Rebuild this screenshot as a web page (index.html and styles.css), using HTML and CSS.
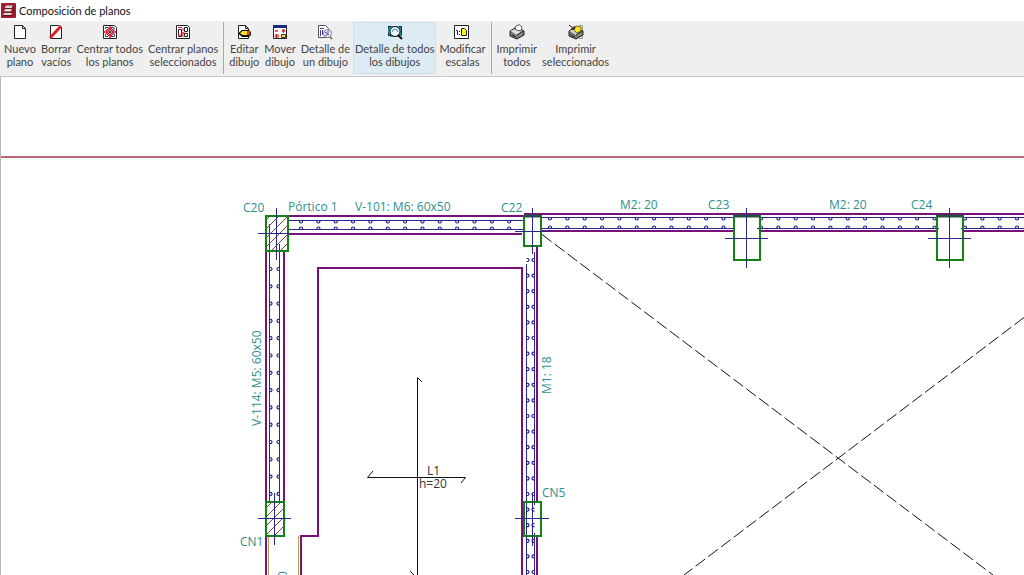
FILE: index.html
```html
<!DOCTYPE html>
<html lang="es">

<head>
    <meta charset="UTF-8">
    <title>Composición de planos</title>
    <link rel="stylesheet" href="styles.css">
</head>

<body>
    <header class="titlebar">
        <svg class="logo" viewBox="0 0 15 15" aria-hidden="true">
            <rect width="15" height="15" rx="1" fill="#a01c30" />
            <path d="M5 2.500h7l-1.500 3H3.500zM4 6h7l-1.500 3H3zM3 10h8l-1 2.500H2z" fill="#e9d5d5" />
            <path d="M3 5.500h8M3 9h8M2 12.500h9M12 3v7" stroke="#4d1820" fill="none" />
        </svg>
        <h1>Composición de planos</h1>
    </header>

    <nav class="toolbar">
        <button>
            <svg class="icon" viewBox="0 0 16 16"><path d="M2.500 1.500h8l3 3v10h-11z" fill="#fff" stroke="#222" /><path d="M10.500 1.500v3h3" fill="none" stroke="#222" /></svg>
            <span>Nuevo<br>plano</span>
        </button>
        <button>
            <svg class="icon" viewBox="0 0 16 16"><path d="M2.500 1.500h8l3 2v11h-11z" fill="#fff" stroke="#222" /><path d="M2 14L13 2" stroke="#d9202c" stroke-width="3" /></svg>
            <span>Borrar<br>vacíos</span>
        </button>
        <button>
            <svg class="icon" viewBox="0 0 16 16">
                <path d="M1.500 1.500h11l2 2v11h-13z" fill="#fff" stroke="#222" />
                <path d="M3.500 5V3.500h3M9 3.500h3V6M3.500 10v2.500H6M9 12.500h3.500V10M5 5l6 6M11 5l-6 6" stroke="#444" fill="none" />
                <path d="M8 2v4M8 10v4M2 8h4M10 8h4M6 4l2 2 2-2M6 12l2-2 2 2M4 6l2 2-2 2M12 6l-2 2 2 2" stroke="#e01c30" stroke-width="1.500" fill="none" />
            </svg>
            <span>Centrar todos<br>los planos</span>
        </button>
        <button>
            <svg class="icon" viewBox="0 0 16 16">
                <path d="M1.500 1.500h11l2 2v11h-13z" fill="#fff" stroke="#222" />
                <path d="M3.500 5.500h3v7h-3zM9.500 3.500h3v4h-3zM9.500 9.500h3v3h-3z" stroke="#222" fill="none" />
                <path d="M3 3.500h4M8 4v3M6 9h4M8 8v5M3 11h3" stroke="#e01c30" fill="none" />
            </svg>
            <span>Centrar planos<br>seleccionados</span>
        </button>
        <hr>
        <button>
            <svg class="icon" viewBox="0 0 16 16">
                <path d="M2.500 1.500h7l3 3v10h-10z" fill="#fff" stroke="#222" />
                <path d="M9.500 1.500v3h3" fill="none" stroke="#222" />
                <path d="M6 6h7l2 2v3l-2 2H6L2 9.500z" fill="#111" />
                <path d="M6.500 7H11v4H6.500L4 9.300z" fill="#ffe426" />
                <path d="M11 7h3v4h-3z" fill="#d84030" />
            </svg>
            <span>Editar<br>dibujo</span>
        </button>
        <button>
            <svg class="icon" viewBox="0 0 16 16">
                <path d="M1.500 1.500h13v13h-13z" fill="#fff" stroke="#222" />
                <path d="M1 1h14v3H1z" fill="#1a2a80" />
                <path d="M3 6h3v2H3zM10 5h3v3h-3zM3 10h4v4H3z" fill="#f0a0a0" />
                <path d="M11.500 5v4M9.500 7h4M4.500 10v4M2.500 12h4M3 7h3" stroke="#d8202c" />
                <path d="M9.500 10.500h4v3h-4z" fill="#ffe426" stroke="#333" />
            </svg>
            <span>Mover<br>dibujo</span>
        </button>
        <button>
            <svg class="icon" viewBox="0 0 16 16">
                <path d="M1.500 1.500h7l3 3v9h-10z" fill="#fff" stroke="#556" />
                <path d="M3 4.500h4M3.500 6v6M5.500 6v5M7 7.500h3" stroke="#4a3898" />
                <circle cx="10.500" cy="9.500" r="4" fill="#eef2ff" stroke="#778" />
                <path d="M8 8l4 3M11 6.500v3M8.500 11h2" stroke="#4a3898" />
                <path d="M13 13l2 2" stroke="#88794a" stroke-width="2" />
            </svg>
            <span>Detalle de<br>un dibujo</span>
        </button>
        <button class="active" aria-pressed="true">
            <svg class="icon" viewBox="0 0 16 16">
                <path d="M1 2h14v10h-2v1H3v-1H1z" fill="#2d8a9c" />
                <path d="M1.500 4V2.500H4M12 2.500h2.500V11M1.500 9v2.500H4" fill="none" stroke="#0b2c3c" />
                <circle cx="8" cy="7.500" r="5" fill="#f0fbff" stroke="#111" />
                <path d="M5 8l1-2 2-1 2 1 1 2" fill="none" stroke="#2d8a9c" />
                <path d="M11 11l4 4" stroke="#111" stroke-width="2" />
            </svg>
            <span>Detalle de todos<br>los dibujos</span>
        </button>
        <button>
            <svg class="icon" viewBox="0 0 16 16">
                <path d="M.5 1.500h14v13H.5z" fill="#fff" stroke="#222" />
                <path d="M2 6.500h1.500V11M5.500 7v1M5.500 10v1" stroke="#222" fill="none" />
                <path d="M7.500 4.500h3l2 2v5h-5z" fill="#ffee26" stroke="#222" />
            </svg>
            <span>Modificar<br>escalas</span>
        </button>
        <hr>
        <button>
            <svg class="icon" viewBox="0 0 16 16">
                <path d="M1 7l7-4 7 4v4l-7 4-7-3z" fill="#777" stroke="#222" />
                <path d="M1.500 7L8 4l6 3-6 4z" fill="#ddd" />
                <path d="M6 3l4-2.500L13 3l-1 4-5-1z" fill="#fff" stroke="#555" />
                <path d="M8 11l6-4M3 11l4 2" stroke="#222" />
                <path d="M10 12l3-2" stroke="#9ab060" />
            </svg>
            <span>Imprimir<br>todos</span>
        </button>
        <button>
            <svg class="icon" viewBox="0 0 16 16">
                <path d="M11 1.500h3.500v13H11" fill="none" stroke="#999" />
                <path d="M1 7l7-4 7 4v4l-7 4-7-3z" fill="#777" stroke="#222" />
                <path d="M1.500 7L8 4l6 3-6 4z" fill="#ccc" />
                <path d="M8 2l5 1v4l-4 2-3-3z" fill="#ffe426" stroke="#776a18" />
                <path d="M8 11l6-4M3 11l4 2" stroke="#222" />
                <path d="M1 1l5 4M6 2v3H3" stroke="#111" fill="none" />
                <path d="M10 12l3-2" stroke="#9ab060" />
            </svg>
            <span>Imprimir<br>seleccionados</span>
        </button>
    </nav>

    <main class="sheet">
        <svg class="plan" viewBox="1 77 1023 498" preserveAspectRatio="xMinYMin slice">
            <defs>
                <pattern id="hatch" width="9" height="9" patternUnits="userSpaceOnUse">
                    <path d="M-1 10L10 -1M-1 1L1 -1M8 10L10 8" stroke="#993a3a" />
                </pattern>
            </defs>

            <path class="limit" d="M0 157H1024" />

            <!-- diagonals of the opening -->
            <path class="diagonal" d="M542 234.500L993 575M1024 317.500L684 575" />

            <!-- wall faces -->
            <g class="wall">
                <path d="M288 216H523M288 234H522" />
                <path d="M524 214H1024M541 231H733M760 231H937M963 231H1024" />
                <path d="M266 251V502M284 251V502M266 536V575" />
                <path d="M522 575V268H318V536H301V575" />
                <path d="M537 246V502M537 536V575" />
            </g>
            <path class="edge" d="M268.500 536V575M298.500 536V575" />

            <!-- reinforcement -->
            <g class="bar">
                <path d="M288 220.500H523M288 229.500H523" />
                <path d="M541 217.500H733M541 228.500H735M757 228.500H939M760 217.500H937M963 217.500H1024M961 228.500H1024" />
                <path d="M269.500 224V502M279.500 244V502" />
                <path d="M526.500 264V575M534.500 252V505M534.500 533V575" />
            </g>
            <g id="hooks" class="hook"></g>

            <!-- columns -->
            <g class="column">
                <rect class="filled" x="266" y="216" width="22" height="35" />
                <rect class="filled" x="266" y="502" width="18" height="34" />
                <rect x="524" y="216" width="17" height="30" />
                <rect x="524" y="502" width="17" height="34" />
                <rect x="734" y="216" width="26" height="44" />
                <rect x="937" y="216" width="26" height="44" />
            </g>
            <path class="cap" d="M524 216H541M734 216H760M937 216H963" />

            <g class="axis">
                <path d="M276.500 208V260M258 233.500H289" />
                <path d="M274.500 493V545M258 518.500H291" />
                <path d="M532.500 208V254M515 231.500H550" />
                <path d="M532.500 493V546M515 518.500H549" />
                <path d="M746.500 208V268M725 238.500H768" />
                <path d="M949.500 208V268M928 238.500H971" />
            </g>

            <!-- slab -->
            <path class="slab" d="M417.500 575V377.500L422 382M410 571L414 575M373 471L367.500 477.500H465.500L461 483" />

            <g class="slab-label">
                <text x="427" y="475">L1</text>
                <text x="419" y="488">h=20</text>
            </g>
            <g class="label">
                <text x="243" y="212">C20</text>
                <text x="288" y="211">Pórtico 1</text>
                <text x="355" y="211">V-101: M6: 60x50</text>
                <text x="501" y="212">C22</text>
                <text x="620" y="209">M2: 20</text>
                <text x="708" y="209">C23</text>
                <text x="829" y="209">M2: 20</text>
                <text x="911" y="209">C24</text>
                <text x="240" y="546">CN1</text>
                <text x="542" y="497">CN5</text>
                <text transform="translate(261 426) rotate(-90)">V-114: M5: 60x50</text>
                <text transform="translate(551 394) rotate(-90)">M1: 18</text>
                <text transform="translate(287 578) rotate(-90)">0</text>
            </g>
        </svg>
    </main>

    <script src="script.js"></script>
</body>

</html>
```

FILE: styles.css
```css
* {
    box-sizing: border-box;
}
body {
    display: flex;
    flex-direction: column;
    height: 100vh;
    margin: 0;
    background-color: #fff;
    font-family: Lato, "Open Sans", sans-serif;
    font-size: 11px;
    color: #444;
}
.titlebar {
    display: flex;
    align-items: center;
    gap: 3px;
    height: 21px;
    padding: 0 1px;
    flex: none;
}
.titlebar h1 {
    margin: 0;
    font-size: 11px;
    font-weight: normal;
    color: #111;
}
.logo {
    width: 15px;
    height: 15px;
}
.toolbar {
    display: flex;
    gap: 1px;
    flex: none;
    padding: 1px 2px 2px;
    background-color: #efefef;
    border-bottom: 1px solid #c8c8c8;
}
.toolbar button {
    display: flex;
    flex-direction: column;
    align-items: center;
    gap: 2px;
    padding: 2px 2px 6px;
    border: 0;
    background: none;
    font: inherit;
    line-height: 13px;
    color: inherit;
    white-space: nowrap;
    cursor: pointer;
}
.toolbar .active {
    background-color: #dcebf4;
    outline: 1px solid #cbe2ee;
    outline-offset: -1px;
}
.toolbar hr {
    width: 1px;
    margin: 0 2px;
    border: 0;
    background-color: #a8a8a8;
}
.icon {
    width: 16px;
    height: 16px;
}
.sheet {
    flex: 1;
    min-height: 0;
    border-left: 1px solid #b8b8b8;
}
.plan {
    display: block;
    width: 100%;
    height: 100%;
    fill: none;
}
.limit {
    stroke: #a83848;
    stroke-width: 1.5;
}
.diagonal {
    stroke: #111;
    stroke-dasharray: 12 4;
}
.wall {
    stroke: #7a117a;
    stroke-width: 2;
}
.edge {
    stroke: #b0a050;
}
.bar, .axis {
    stroke: #28288c;
}
.hook {
    stroke: #20208c;
    stroke-width: 1.2;
}
.column {
    stroke: #148214;
    stroke-width: 2;
}
.column .filled {
    fill: url(#hatch);
}
.cap {
    stroke: #24503c;
    stroke-width: 3;
}
.slab {
    stroke: #111;
}
.label, .slab-label {
    font-family: "Open Sans", sans-serif;
    font-size: 12px;
    fill: #2c9090;
}
.slab-label {
    fill: #333;
}
```

FILE: script.js
```js
var hooks = document.getElementById("hooks");

function addHook(x, y, arc) {
    var path = document.createElementNS("http://www.w3.org/2000/svg", "path");
    path.setAttribute("d", "M" + x + " " + y + arc);
    hooks.appendChild(path);
}

// pairs of hooks along a horizontal wall
function addRow(from, to, step, top, bottom) {
    for (var x = from; x < to; x += step) {
        addHook(x - 1.5, top, "v1a1.5 1.5 0 0 0 3 0v-1");
        addHook(x - 1.5, bottom, "v-1a1.5 1.5 0 0 1 3 0v1");
    }
}

// pairs of hooks along a vertical wall
function addColumn(from, to, step, left, right) {
    for (var y = from; y < to; y += step) {
        addHook(left, y - 1.5, "h1a1.5 1.5 0 0 1 0 3h-1");
        addHook(right, y - 1.5, "h-1a1.5 1.5 0 0 0 0 3h1");
    }
}

addRow(301, 522, 17.35, 220.5, 229.5);
addRow(550, 733, 17.35, 217.5, 228.5);
addRow(761, 937, 17.35, 217.5, 228.5);
addRow(965, 1024, 17.35, 217.5, 228.5);
addColumn(269, 502, 17.3, 269.5, 279.5);
addColumn(260, 575, 15.6, 526.5, 534.5);
```
